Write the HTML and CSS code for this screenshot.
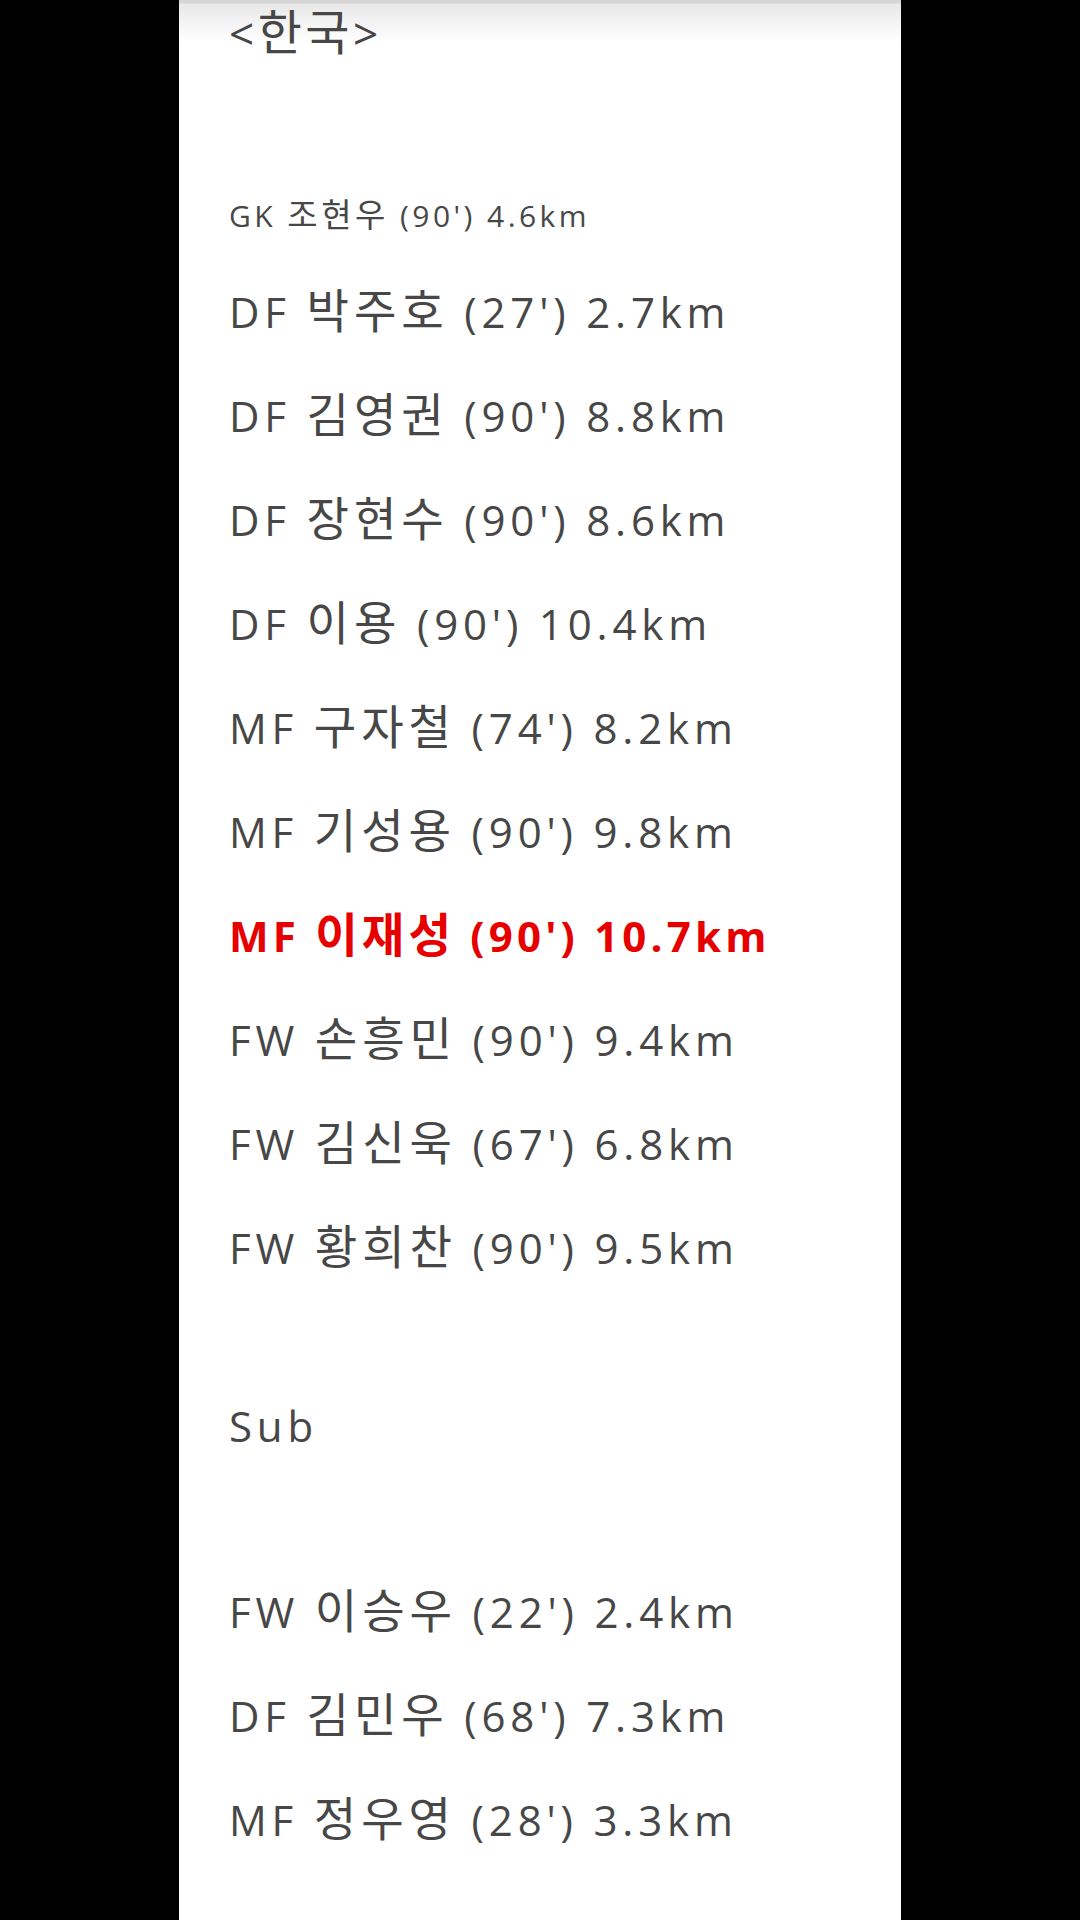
FILE: index.html
```
<!DOCTYPE html>
<html lang="ko">
<head>
    <meta charset="UTF-8">
    <meta name="viewport" content="width=device-width, initial-scale=1.0">
    <title>한국 선수 뛴 거리</title>
    <link rel="stylesheet" href="styles.css">
</head>
<body>

    <div class="page">
        <p class="team">&lt;<span class="name">한국</span>&gt;</p>

        <p class="row gk">GK <span class="name">조현우</span> (90') 4.6km</p>

        <div class="lineup">
            <p class="row">DF <span class="name">박주호</span> (27') 2.7km</p>
            <p class="row">DF <span class="name">김영권</span> (90') 8.8km</p>
            <p class="row">DF <span class="name">장현수</span> (90') 8.6km</p>
            <p class="row">DF <span class="name">이용</span> (90') 10.4km</p>
            <p class="row">MF <span class="name">구자철</span> (74') 8.2km</p>
            <p class="row">MF <span class="name">기성용</span> (90') 9.8km</p>
            <p class="row best">MF <span class="name">이재성</span> (90') 10.7km</p>
            <p class="row">FW <span class="name">손흥민</span> (90') 9.4km</p>
            <p class="row">FW <span class="name">김신욱</span> (67') 6.8km</p>
            <p class="row">FW <span class="name">황희찬</span> (90') 9.5km</p>
        </div>

        <p class="row sub-title">Sub</p>

        <div class="lineup subs">
            <p class="row">FW <span class="name">이승우</span> (22') 2.4km</p>
            <p class="row">DF <span class="name">김민우</span> (68') 7.3km</p>
            <p class="row">MF <span class="name">정우영</span> (28') 3.3km</p>
        </div>
    </div>

</body>
</html>
```

FILE: styles.css
```
html, body {
    margin: 0;
    padding: 0;
    background-color: #000;
}

body {
    height: 1920px;
    overflow: hidden;
    font-family: "Open Sans", "Noto Sans CJK KR", sans-serif;
    color: #474747;
}

.page {
    width: 722px;
    height: 1920px;
    margin-left: 179px;
    padding-left: 50px;
    box-sizing: border-box;
    background: linear-gradient(#d6d6d6 0, #d6d6d6 3px, #e8e8e8 4px, #fff 42px);
}

p {
    margin: 0;
}

.name {
    font-family: "Noto Sans CJK KR", sans-serif;
    font-size: 1.1em;
    line-height: 1;
}

.team {
    font-size: 44px;
    line-height: 66px;
    height: 66px;
    letter-spacing: 0.08em;
}

.team .name {
    font-size: 48px;
}

.row {
    font-size: 42px;
    line-height: 104px;
    height: 104px;
    letter-spacing: 0.115em;
    white-space: nowrap;
}

.gk {
    font-size: 30px;
    margin-top: 110px;
    line-height: 80px;
    height: 80px;
}

.lineup {
    margin-top: 4px;
}

.best {
    color: #e60000;
    font-weight: bold;
    letter-spacing: 0.1em;
}

.sub-title {
    margin-top: 74px;
}

.subs {
    margin-top: 82px;
}
```
